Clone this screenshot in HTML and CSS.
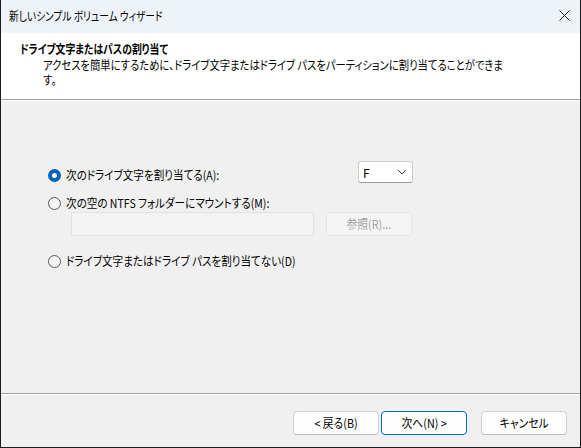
FILE: index.html
```html
<!DOCTYPE html>
<html lang="ja">
<head>
<meta charset="utf-8">
<link rel="stylesheet" href="styles.css">
</head>
<body>
<div class="window">
  <div class="titlebar">
    <span class="title cx">新しいシンプル ボリューム ウィザード</span>
    <svg class="close" width="11" height="11" viewBox="0 0 11 11"><path d="M0.5 0.5 L10.5 10.5 M10.5 0.5 L0.5 10.5" stroke="#222" stroke-width="1" fill="none"/></svg>
  </div>
  <div class="header">
    <div class="h-title"><span class="cx">ドライブ文字またはパスの割り当て</span></div>
    <div class="h-sub"><span class="cx">アクセスを簡単にするために、ドライブ文字またはドライブ パスをパーティションに割り当てることができま</span></div>
    <div class="h-sub"><span class="cx">す。</span></div>
  </div>
  <div class="content">
    <div class="row row1">
      <label class="opt"><span class="radio checked"></span><span class="cx lbl">次のドライブ文字を割り当てる(A):</span></label>
      <div class="select"><span>F</span><svg width="10" height="6" viewBox="0 0 10 6"><path d="M1 1 L5 5 L9 1" stroke="#444" stroke-width="1" fill="none"/></svg></div>
    </div>
    <div class="row row2">
      <label class="opt"><span class="radio"></span><span class="cx lbl">次の空の NTFS フォルダーにマウントする(M):</span></label>
    </div>
    <div class="row row-input">
      <div class="textbox"></div>
      <div class="btn disabled browse"><span class="cx bt">参照(R)...</span></div>
    </div>
    <div class="row row3">
      <label class="opt"><span class="radio"></span><span class="cx lbl">ドライブ文字またはドライブ パスを割り当てない(D)</span></label>
    </div>
  </div>
  <div class="footer">
    <div class="btn"><span class="cx bt">&lt; 戻る(B)</span></div>
    <div class="btn primary"><span class="cx bt">次へ(N) &gt;</span></div>
    <div class="btn cancel"><span class="cx bt">キャンセル</span></div>
  </div>
</div>
</body>
</html>
```
FILE: styles.css
```css
html, body {
  margin: 0;
  padding: 0;
  background: #f0f0f0;
}
body {
  font-family: "Noto Sans CJK JP", "Noto Sans", sans-serif;
  font-size: 12px;
  font-feature-settings: "palt";
  color: #000;
}
.cx {
  display: inline-block;
  white-space: nowrap;
  transform-origin: left center;
}
.window {
  width: 581px;
  height: 448px;
  box-sizing: border-box;
  border: 1px solid #1c1c1c;
  border-top: none;
  display: flex;
  flex-direction: column;
  background: #f0f0f0;
  overflow: hidden;
}
.titlebar {
  height: 33px;
  flex: none;
  background: #eef3f9;
  display: flex;
  align-items: center;
  justify-content: space-between;
  padding: 0 10px 0 8px;
  box-sizing: border-box;
}
.title {
  line-height: 16px;
  margin-top: -2px;
  transform: scaleX(0.81);
}
.close {
  margin-top: -2px;
}
.header {
  height: 67px;
  flex: none;
  background: #fff;
  box-sizing: border-box;
  padding: 8px 0 0 19px;
  border-bottom: 1px solid #a0a0a0;
  box-shadow: 0 1px 0 #fff;
}
.h-title {
  font-weight: bold;
  height: 16px;
  line-height: 16px;
}
.h-title .cx {
  transform: scaleX(0.82);
}
.h-sub {
  padding-left: 23px;
  height: 15px;
  line-height: 15px;
  white-space: nowrap;
}
.h-sub .cx {
  transform: scaleX(0.86);
}
.content {
  flex: 1;
  padding: 60px 0 0 47px;
  margin-top: 1px;
  display: flex;
  flex-direction: column;
  border-bottom: 1px solid #a0a0a0;
  box-shadow: 0 1px 0 #fff;
}
.row {
  display: flex;
  align-items: center;
}
.row1 {
  width: 365px;
  height: 22px;
  justify-content: space-between;
  align-items: flex-start;
}
.row1 .opt {
  margin-top: 6px;
}
.row2 {
  height: 16px;
  margin-top: 12px;
}
.row-input {
  margin-top: 1px;
  padding-left: 23px;
  height: 24px;
  gap: 12px;
}
.row3 {
  height: 16px;
  margin-top: 17px;
}
.opt {
  display: flex;
  align-items: center;
  gap: 5px;
  height: 16px;
  line-height: 16px;
}
.lbl {
  transform: scaleX(0.88);
}
.radio {
  width: 13px;
  height: 13px;
  box-sizing: border-box;
  border-radius: 50%;
  border: 1px solid #5a5a5a;
  background: #f5f5f5;
  flex: none;
}
.radio.checked {
  border: 4px solid #0063b8;
  background: #fff;
}
.select {
  width: 55px;
  height: 22px;
  box-sizing: border-box;
  border: 1px solid #cccccc;
  border-bottom-color: #9a9a9a;
  border-radius: 3px;
  background: #fff;
  display: flex;
  align-items: center;
  justify-content: space-between;
  padding: 0 5px 0 4px;
}
.textbox {
  width: 243px;
  height: 24px;
  box-sizing: border-box;
  border: 1px solid #e2e2e2;
  background: #f3f3f3;
}
.btn {
  width: 86px;
  height: 24px;
  box-sizing: border-box;
  border: 1px solid #d0d0d0;
  border-bottom-color: #bdbdbd;
  border-radius: 4px;
  background: #fdfdfd;
  display: flex;
  align-items: center;
  justify-content: center;
  line-height: 16px;
}
.bt {
  transform: scaleX(0.9);
  transform-origin: center center;
}
.btn.disabled {
  color: #a0a0a0;
  background: #f5f5f5;
  border-color: #e5e5e5;
}
.btn.primary {
  border: 1px solid #0067c0;
}
.footer {
  height: 52px;
  flex: none;
  margin-top: 1px;
  display: flex;
  align-items: flex-start;
  padding: 16px 0 0 292px;
  box-sizing: border-box;
  gap: 2px;
}
.btn.cancel {
  margin-left: 12px;
}
```
